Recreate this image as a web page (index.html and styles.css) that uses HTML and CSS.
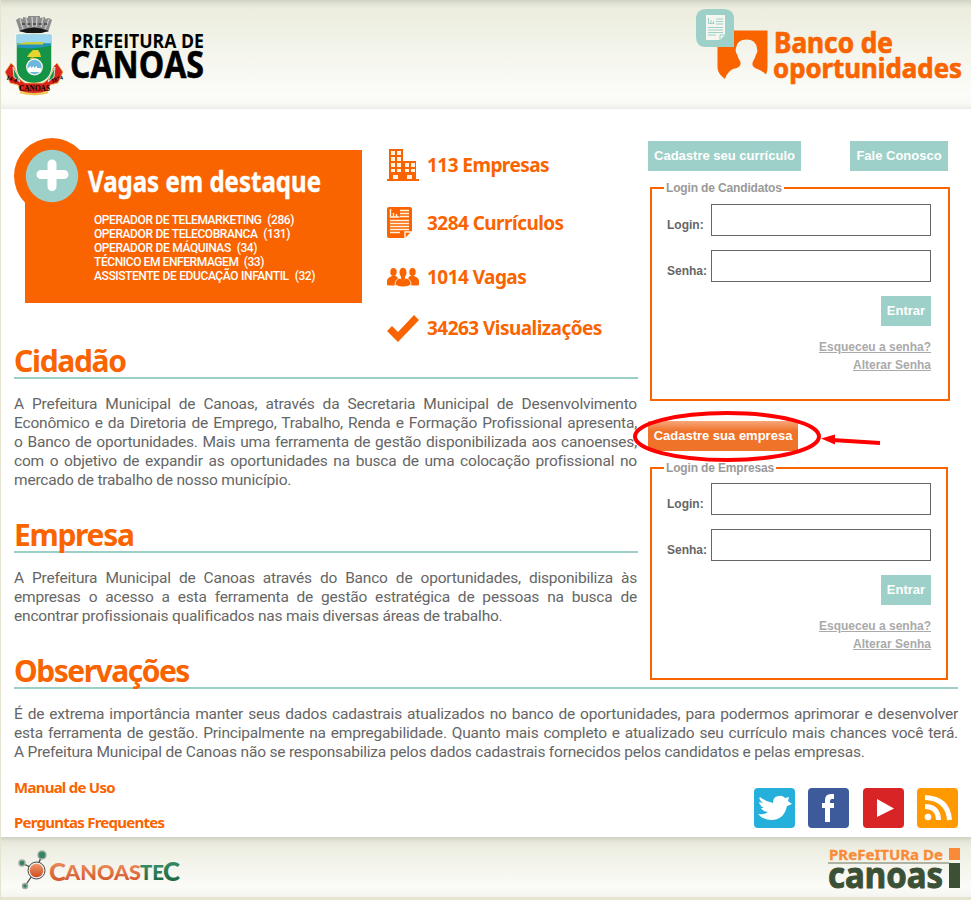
FILE: index.html
```html
<!DOCTYPE html>
<html lang="pt-BR">
<head>
<meta charset="utf-8">
<title>Banco de oportunidades</title>
<link rel="stylesheet" href="styles.css">
</head>
<body>
<header class="top">
  <svg class="city-logo" width="210" height="90" viewBox="0 10 210 90">
    <path d="M16 20l3-2 4 1v-2l5 1v-2h12v2l5-1v2l4-1 3 2-4 12q-14-5-28 0z" fill="#8b8b8b"/>
    <path d="M20 19l3 10M26 18l2 9M32 17l1 10M37 17l-1 10M43 18l-2 9M49 19l-4 10" stroke="#c4c4c4" stroke-width="1.500"/>
    <path d="M22 24h25" stroke="#555" stroke-width="2" stroke-dasharray="3 2.500"/>
    <path d="M19 31q15-7 30 0-15 5-30 0z" fill="#151515"/>
    <path d="M16 34h36v32q0 16-18 18-18-2-18-18z" fill="#159447" stroke="#f6f6f0" stroke-width="1.500"/>
    <path d="M16.500 34.500h35v9h-35z" fill="#9bd4ef"/><path d="M17 43.500h34v2l-10 2-12 1-12-1z" fill="#2395bd"/><path d="M17 44l9-2h17v2.500H17z" fill="#c9cf3f"/>
    <path d="M29 54l4-4h5l2 3 1 4H27z" fill="#e9d32d"/><path d="M32 57l-3 2h9z" fill="#c8b428"/>
    <circle cx="34.500" cy="67" r="7.800" fill="#6cb7de" stroke="#f5f5e5" stroke-width="1.300"/>
    <path d="M28 72v-4l3-2v2l3-2v2l3-2v2h4v4z" fill="#fff"/>
    <path d="M5 72l6-9 3 3 2 5q3 9 9 12h18q6-3 9-12l2-5 3-3 6 9-3 6-2 5-8 2-2 6q-14 5-28 0l-2-6-8-2-2-5z" fill="#d8251d" stroke="#e8c95a" stroke-width=".8"/>
    <path d="M13 67l5 9 2 6-6-5zM55 67l-5 9-2 6 6-5z" fill="#159447" stroke="#f6f6f0" stroke-width=".8"/>
    <path d="M20 92.500q14 4 28 0" fill="none" stroke="#edc342" stroke-width="1.500"/>
    <text x="19" y="91" class="crest-name" textLength="31" lengthAdjust="spacingAndGlyphs">CANOAS</text>
    <text x="6" y="79" class="crest-date" transform="rotate(20 6 79)">14-4</text><text x="52" y="83" class="crest-date" transform="rotate(-20 52 83)">1874</text>
    <text x="71" y="47.500" class="logo-a" font-size="19.500" textLength="133" lengthAdjust="spacingAndGlyphs">PREFEITURA DE</text>
    <text x="70" y="78" class="logo-a big" font-size="37" textLength="134" lengthAdjust="spacingAndGlyphs">CANOAS</text>
  </svg>
  <svg class="bank-logo" width="270" height="82" viewBox="694 6 270 82">
    <path d="M717.500 30.500h50v37q0 4-1.500 7-4-4-10-6-5-2-3-7 2-3 3-7 2-2 1-6-1-9-10.500-9T736 48q-1 4 1 6 1 4 3 7 2 5-3 7-9 1-12 11-7-5-7.500-11z" fill="#f96400"/>
    <path d="M707 9h17q10 0 10 10v28h-28q-10 0-10-10V19q0-10 11-10z" fill="#9dd0c8"/>
    <path d="M706 15h19v20l-5 5h-14z" fill="#f5f6ef"/>
    <path d="M708.500 18v5.500h6M711 23v-3M713.500 23v-2M716 19h7M716 21.500h7M716 24h7M708 27.500h15M708 30h15M708 32.500h15M708 35h8M720 40v-5h5" fill="none" stroke="#9dd0c8" stroke-width="1"/>
    <text x="774" y="53" class="logo-b" font-size="28" textLength="119" lengthAdjust="spacingAndGlyphs">Banco de</text>
    <text x="773" y="78" class="logo-b" font-size="27.500" textLength="189" lengthAdjust="spacingAndGlyphs">oportunidades</text>
  </svg>
</header>
<main>
  <div class="columns">
    <div class="left">
      <div class="summary">
        <section class="jobs">
          <svg class="plus" width="76" height="80" viewBox="0 0 76 80"><circle cx="38" cy="38" r="38" fill="#f96400"/><circle cx="38" cy="38" r="26.200" fill="#9dd0c8"/><path d="M38 26v22.500M27 36.500h23" stroke="#fff" stroke-width="9" stroke-linecap="round"/></svg>
          <svg class="jobs-title" width="240" height="42"><text x="0" y="31" class="logo-w" font-size="29" textLength="233" lengthAdjust="spacingAndGlyphs">Vagas em destaque</text></svg>
          <ul>
            <li class="j1">OPERADOR DE TELEMARKETING&nbsp; (286)</li>
            <li class="j2">OPERADOR DE TELECOBRANCA&nbsp; (131)</li>
            <li class="j3">OPERADOR DE MÁQUINAS&nbsp; (34)</li>
            <li class="j4">TÉCNICO EM ENFERMAGEM&nbsp; (33)</li>
            <li class="j5">ASSISTENTE DE EDUCAÇÃO INFANTIL&nbsp; (32)</li>
          </ul>
        </section>
        <ul class="stats">
          <li class="s1"><svg width="32" height="34" viewBox="0 0 32 34"><path d="M2 1h14v12h13v18h3v2H0v-2h2z" fill="#f96400"/><path d="M4 3h4v4H4zM10 3h4v4h-4zM4 9h4v4H4zM10 9h4v4h-4zM4 15h4v4H4zM10 15h4v4h-4zM4 21h4v3H4zM10 21h4v3h-4zM18 15h4v4h-4zM24 15h4v4h-4zM18 21h4v3h-4zM24 21h4v3h-4zM6 27h5v4H6zM20 27h5v4h-5z" fill="#fff2df"/></svg><span>113 Empresas</span></li>
          <li class="s2"><svg width="32" height="34" viewBox="0 0 32 34"><path d="M2 1h21q2 0 2 2v22l-7 7H2q-2 0-2-2V3q0-2 2-2z" fill="#f96400"/><path d="M3.500 3v8h9M6.500 11V7M9.500 11V8M13 4.500h9M13 7.500h9M13 10.500h9M3 14.500h19M3 17.500h19M3 20.500h19M3 23.500h19M3 26.500h10M18 32v-6h7" fill="none" stroke="#fff2df" stroke-width="1.400"/></svg><span>3284 Currículos</span></li>
          <li class="s3"><svg width="32" height="34" viewBox="0 0 32 34"><g fill="#f96400"><ellipse cx="6.500" cy="12" rx="3.200" ry="4"/><ellipse cx="25.500" cy="12" rx="3.200" ry="4"/><path d="M0 25v-4q0-3 5-5h4l3 3-3 6q-5 1-9 0zM32 25v-4q0-3-5-5h-4l-3 3 3 6q5 1 9 0z"/><path d="M8 25q0-6 5-7l3 2 3-2q5 1 5 7-8 4-16 0z" stroke="#fff" stroke-width=".8"/><ellipse cx="16" cy="12.500" rx="3.500" ry="4.800"/><path d="M14 15h4v4l-2 2-2-2z"/></g></svg><span>1014 Vagas</span></li>
          <li class="s4"><svg width="32" height="34" viewBox="0 0 32 34"><path d="M0 20l5-5 6 6L27 4l5 5-21 22z" fill="#f96400"/></svg><span>34263 Visualizações</span></li>
        </ul>
      </div>
      <section class="block">
        <h2>Cidadão</h2>
        <p><span>A Prefeitura Municipal de Canoas, através da Secretaria Municipal de Desenvolvimento</span><span>Econômico e da Diretoria de Emprego, Trabalho, Renda e Formação Profissional apresenta,</span><span>o Banco de oportunidades. Mais uma ferramenta de gestão disponibilizada aos canoenses,</span><span>com o objetivo de expandir as oportunidades na busca de uma colocação profissional no</span><span class="last">mercado de trabalho de nosso município.</span></p>
      </section>
      <section class="block">
        <h2>Empresa</h2>
        <p><span>A Prefeitura Municipal de Canoas através do Banco de oportunidades, disponibiliza às</span><span>empresas o acesso a esta ferramenta de gestão estratégica de pessoas na busca de</span><span class="last">encontrar profissionais qualificados nas mais diversas áreas de trabalho.</span></p>
      </section>
    </div>
    <aside class="right">
      <div class="buttons"><a class="btn b-cv">Cadastre seu currículo</a><a class="btn b-contact">Fale Conosco</a></div>
      <fieldset class="people">
        <legend>Login de Candidatos</legend>
        <div class="row"><label for="u1">Login:</label><input id="u1" type="text"></div>
        <div class="row"><label for="p1">Senha:</label><input id="p1" type="password"></div>
        <div class="actions"><button class="btn" type="button">Entrar</button><a class="first">Esqueceu a senha?</a><a>Alterar Senha</a></div>
      </fieldset>
      <div class="company"><a class="btn b-company">Cadastre sua empresa</a>
        <svg class="mark" width="250" height="54" viewBox="632 410 250 54"><ellipse cx="727" cy="436.500" rx="92" ry="23.500" fill="none" stroke="#f00" stroke-width="4"/><path d="M832 440l48 3" stroke="#f00" stroke-width="4"/><path d="M821 438.500l14-4v10z" fill="#f00"/></svg>
      </div>
      <fieldset class="firms">
        <legend>Login de Empresas</legend>
        <div class="row"><label for="u2">Login:</label><input id="u2" type="text"></div>
        <div class="row"><label for="p2">Senha:</label><input id="p2" type="password"></div>
        <div class="actions"><button class="btn" type="button">Entrar</button><a class="first">Esqueceu a senha?</a><a>Alterar Senha</a></div>
      </fieldset>
    </aside>
  </div>
  <section class="block notes">
    <h2>Observações</h2>
    <p><span>É de extrema importância manter seus dados cadastrais atualizados no banco de oportunidades, para podermos aprimorar e desenvolver</span><span>esta ferramenta de gestão. Principalmente na empregabilidade. Quanto mais completo e atualizado seu currículo mais chances você terá.</span><span class="last">A Prefeitura Municipal de Canoas não se responsabiliza pelos dados cadastrais fornecidos pelos candidatos e pelas empresas.</span></p>
  </section>
  <div class="bottom">
    <nav><a>Manual de Uso</a><a class="faq">Perguntas Frequentes</a></nav>
    <div class="social">
      <svg width="41" height="40" viewBox="0 0 41 40"><rect width="41" height="40" rx="4" fill="#25b0dc"/><path d="M4 26q7 1 10-2-5 0-7-4h3q-4-2-5-6l4 1q-5-4-3-6 6 5 13 6 0-7 6-7 3-1 6 2l4-1-1 4 4 3-5 2q-3 14-16 14-8 0-13-6z" fill="#fff"/></svg>
      <svg width="41" height="40" viewBox="0 0 41 40"><rect width="41" height="40" rx="4" fill="#3d5a9a"/><path d="M17 34V20h-3v-5h3v-3q0-6 6-6h3v5h-2q-2 0-2 2v2h4v5h-4v14z" fill="#fff"/></svg>
      <svg width="41" height="40" viewBox="0 0 41 40"><rect width="41" height="40" rx="4" fill="#d92426"/><path d="M14 11l17 9.500L14 29z" fill="#fff"/></svg>
      <svg width="41" height="40" viewBox="0 0 41 40"><rect width="41" height="40" rx="4" fill="#f90"/><circle cx="11" cy="29" r="3.300" fill="#fff"/><path d="M8 18.500q13 0 13.500 13.500M8 9.500q23 1 24.500 22.500" fill="none" stroke="#fff" stroke-width="5"/></svg>
    </div>
  </div>
</main>
<footer>
  <svg width="170" height="48" viewBox="16 846 170 48">
    <defs><linearGradient id="o" x2="0" y2="1"><stop stop-color="#f19a69"/><stop offset="1" stop-color="#ce4c20"/></linearGradient><linearGradient id="g" x2="0" y2="1"><stop stop-color="#3f9971"/><stop offset="1" stop-color="#17603c"/></linearGradient></defs>
    <path d="M36 870l6-15M36 870l-14-7M36 870L25 886" stroke="#444" stroke-width="1.300"/>
    <g fill="#318660" stroke="#a3aaa4" stroke-width="1.500"><circle cx="42" cy="855" r="4"/><circle cx="22" cy="863" r="3"/><circle cx="25" cy="886" r="2.500"/></g>
    <circle cx="36.500" cy="870.500" r="8.500" fill="#eee" stroke="#444"/><circle cx="36.500" cy="870.500" r="6.800" fill="url(#o)"/>
    <text x="49" y="880.500" class="tec" font-size="24" fill="url(#o)" textLength="17" lengthAdjust="spacingAndGlyphs">C</text><text x="65" y="880" class="tec" font-size="21.500" fill="url(#o)" textLength="76" lengthAdjust="spacingAndGlyphs">ANOAS</text><text x="140" y="880" class="tec" font-size="21.500" fill="url(#g)" textLength="24" lengthAdjust="spacingAndGlyphs">TE</text><text x="163" y="880.500" class="tec" font-size="27" fill="url(#g)" textLength="17" lengthAdjust="spacingAndGlyphs">C</text>
  </svg>
  <svg width="134" height="44" viewBox="827 845 134 44">
    <text x="829" y="858.500" class="gov small" font-size="14" textLength="114" lengthAdjust="spacingAndGlyphs">PReFeITURa De</text>
    <path d="M828 862h121" stroke="#99a18c" stroke-width="1.500"/><path d="M949 847h11v12h-11z" fill="#f98b38"/><path d="M949 862h11v25h-11z" fill="#3b5035"/>
    <text x="828" y="886.500" class="gov" font-size="36" textLength="115" lengthAdjust="spacingAndGlyphs">canoas</text>
  </svg>
</footer>
</body>
</html>
```
FILE: styles.css
```css
* { box-sizing: border-box; }
body { margin: 0; height: 900px; padding-left: 1px; background: #e5e4d1; color: #666; font-family: Roboto, sans-serif; overflow: hidden; }
ul { list-style: none; margin: 0; padding: 0; }
svg { display: block; overflow: visible; flex: none; }
.top { height: 109px; display: flex; justify-content: space-between; padding: 10px 7px 0 0; background: linear-gradient(#d2d4c5 0 1px, #dddfd0 3px, #ecedde 8px, #fcfcf9 95px, #f9f9f6 103px, #eeeee8 109px); }
.city-logo { margin-left: -1px; }
.bank-logo { margin-top: -4px; }
.crest-name { font: bold 8px "Liberation Serif", serif; }
.crest-date { font: bold 6px "Liberation Serif", serif; }
.logo-a { font-family: "Open Sans", sans-serif; font-weight: 700; fill: #000; }
.big { stroke: #000; stroke-width: .6px; }
.logo-b, .logo-w { font-family: "Noto Sans", sans-serif; font-weight: 700; fill: #f96400; stroke: #f96400; stroke-width: .7px; }
.logo-w { fill: #fff; stroke: #fff; stroke-width: .4px; }
.tec { font-family: Lato, sans-serif; font-weight: 900; }
.gov { font-family: "Noto Sans", sans-serif; font-weight: 700; fill: #3b5035; stroke: #3b5035; stroke-width: 1px; }
.gov.small { fill: #f98b38; stroke: #f98b38; stroke-width: .3px; }
main { height: 728px; background: #fff; padding: 0 13px; }
.columns { display: flex; justify-content: space-between; height: 516px; }
.left { width: 623px; }
.summary { display: flex; height: 234px; }
.jobs { flex: none; position: relative; width: 337px; height: 153px; margin: 41px 0 0 11px; padding: 11px 0 0 63px; background: #f96400; }
.plus { position: absolute; left: -11px; top: -12px; }
.jobs-title { position: relative; height: 42px; }
.jobs ul { padding: 10px 0 0 6px; color: #fff; font: 500 12px/14px Roboto, sans-serif; letter-spacing: -.42px; }
.jobs li { text-align-last: justify; white-space: nowrap; }
.j1 { width: 200px; } .j2 { width: 196px; } .j3 { width: 163px; } .j4 { width: 170px; } .j5 { width: 221px; }
.stats { margin-left: 25px; padding-top: 39px; color: #f96400; font: bold 19px/34px "Noto Sans", sans-serif; letter-spacing: -.55px; }
.stats li { display: flex; align-items: center; gap: 8px; height: 34px; white-space: nowrap; }
.stats .s2 { margin-top: 24px; } .stats .s3 { margin-top: 20px; } .stats .s4 { margin-top: 17px; }
.block h2 { margin: 0 -1px 0 0; height: 36px; border-bottom: 2px solid #9bcfc6; color: #f96400; font: bold 30px/36px "Noto Sans", sans-serif; letter-spacing: -1.3px; }
.notes h2 { margin-right: 0; letter-spacing: -1.5px; }
.block + .block, .notes { margin-top: 28px; }
.block p { margin: 16px 0 0; height: 94px; font-size: 15.5px; line-height: 19px; letter-spacing: -.2px; }
.block + .block p { height: auto; }
.notes p { height: 57px; }
.block p span { display: block; text-align-last: justify; white-space: nowrap; }
.block p .last { text-align-last: left; }
.right { width: 310px; padding-top: 32px; font: bold 12px/14px "Liberation Sans", sans-serif; }
.buttons { display: flex; justify-content: space-between; padding-right: 10px; }
.btn { display: flex; align-items: center; justify-content: center; height: 30px; padding: 0 0 1px; border: 0; background: #9dd0c8; color: #fff; font: bold 13px "Liberation Sans", sans-serif; white-space: nowrap; }
.b-cv { width: 153px; } .b-contact { width: 98px; } .b-company { width: 150px; background: linear-gradient(#f7a77a, #f0732a 10px); }
fieldset { width: 300px; height: 220px; margin: 10px 0 0 2px; padding: 0 17px 0 12px; border: 2px solid #f96400; }
legend { padding: 0 2px; color: #999; letter-spacing: -.15px; }
.row { display: flex; height: 32px; margin-bottom: 14px; padding-left: 3px; }
.people .row:nth-of-type(1) { margin-top: 9px; }
.firms .row:nth-of-type(1) { margin-top: 8px; }
label { width: 44px; padding-top: 14px; }
input { width: 220px; height: 32px; border: 1px solid #666; background: #fff; padding: 0 5px; }
.actions { display: flex; flex-direction: column; align-items: flex-end; color: #aaa; line-height: 18px; }
.actions a { text-decoration: underline; }
.actions .btn { width: 50px; }
.actions .first { margin-top: 12px; }
.company { position: relative; margin-top: 20px; }
.mark { position: absolute; left: -16px; top: -11px; }
.firms { width: 298px; height: 219px; margin-top: 10px; padding-right: 15px; }
.bottom { display: flex; justify-content: space-between; padding-top: 16px; }
nav { display: flex; flex-direction: column; gap: 15px; margin-top: -1px; color: #f96400; font: bold 15px/20px "Noto Sans", sans-serif; letter-spacing: -.75px; }
.social { display: flex; gap: 13.500px; padding-top: 10px; }
footer { display: flex; justify-content: space-between; height: 60px; padding: 9px 10px 0 15px; background: linear-gradient(#d2d4c5 0 1px, #e4e5d9 4px, #edeee1 10px, #fbfbf8 50px, #f4f5f1 60px); }
```
